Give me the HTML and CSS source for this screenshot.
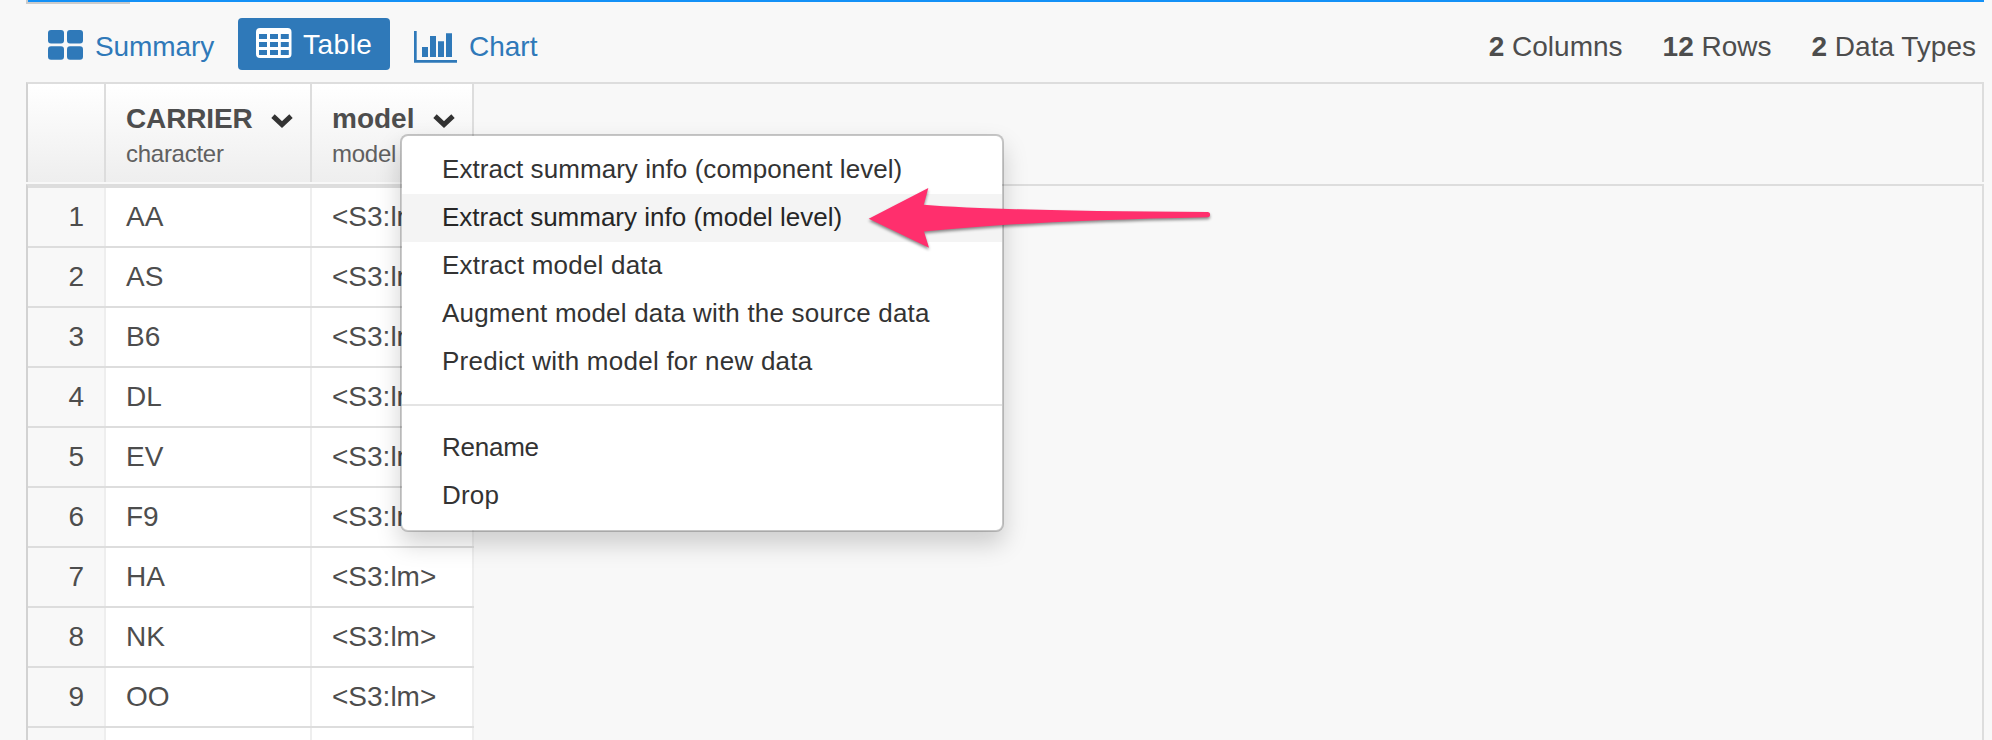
FILE: index.html
```html
<!DOCTYPE html>
<html lang="en">
<head>
<meta charset="utf-8">
<title>Table view</title>
<link rel="stylesheet" href="styles.css">
</head>
<body>
<div class="page">
  <div class="topline"><div class="topline-tab"></div></div>
  <div class="toolbar">
    <div class="views">
      <a class="view view-summary">
        <svg class="icon" width="35" height="30" viewBox="0 0 35 30" fill="currentColor"><rect x="0" y="0" width="16" height="13.5" rx="3"/><rect x="19" y="0" width="16" height="13.5" rx="3"/><rect x="0" y="16.3" width="16" height="13.5" rx="3"/><rect x="19" y="16.3" width="16" height="13.5" rx="3"/></svg>
        <span>Summary</span>
      </a>
      <a class="view view-table">
        <svg class="icon" width="36" height="30" viewBox="0 0 36 30" fill="currentColor" fill-rule="evenodd"><path d="M4 0H31.500a4 4 0 0 1 4 4V26a4 4 0 0 1-4 4H4a4 4 0 0 1-4-4V4a4 4 0 0 1 4-4ZM3 6v5h8V6ZM14 6v5h8V6ZM24.800 6v5h8V6ZM3 14v5h8v-5ZM14 14v5h8v-5ZM24.800 14v5h8v-5ZM3 22v5h8v-5ZM14 22v5h8v-5ZM24.800 22v5h8v-5Z"/></svg>
        <span>Table</span>
      </a>
      <a class="view view-chart">
        <svg class="icon" width="43" height="32" viewBox="0 0 43 32" fill="currentColor"><path d="M0 0H2.700V29H43V31.700H0ZM8 16h6v10H8ZM16 5h6v21h-6ZM24 10.300h6V26h-6ZM32 2.300h6V26h-6Z"/></svg>
        <span>Chart</span>
      </a>
    </div>
    <div class="stats">
      <span><b>2</b> Columns</span>
      <span><b>12</b> Rows</span>
      <span><b>2</b> Data Types</span>
    </div>
  </div>
  <div class="grid-head">
    <div class="head-cell col-num"></div>
    <div class="head-cell col-carrier">
      <div class="head-name"><span>CARRIER</span><svg class="chevron" width="22" height="14" viewBox="0 0 22 14"><path d="M2 2.200 11 10.500 20 2.200"/></svg></div>
      <div class="head-type">character</div>
    </div>
    <div class="head-cell col-model">
      <div class="head-name"><span>model</span><svg class="chevron" width="22" height="14" viewBox="0 0 22 14"><path d="M2 2.200 11 10.500 20 2.200"/></svg></div>
      <div class="head-type">model</div>
    </div>
  </div>
  <div class="grid-body">
    <div class="rows">
      <div class="row"><div class="cell col-num">1</div><div class="cell col-carrier">AA</div><div class="cell col-model">&lt;S3:lm&gt;</div></div>
      <div class="row"><div class="cell col-num">2</div><div class="cell col-carrier">AS</div><div class="cell col-model">&lt;S3:lm&gt;</div></div>
      <div class="row"><div class="cell col-num">3</div><div class="cell col-carrier">B6</div><div class="cell col-model">&lt;S3:lm&gt;</div></div>
      <div class="row"><div class="cell col-num">4</div><div class="cell col-carrier">DL</div><div class="cell col-model">&lt;S3:lm&gt;</div></div>
      <div class="row"><div class="cell col-num">5</div><div class="cell col-carrier">EV</div><div class="cell col-model">&lt;S3:lm&gt;</div></div>
      <div class="row"><div class="cell col-num">6</div><div class="cell col-carrier">F9</div><div class="cell col-model">&lt;S3:lm&gt;</div></div>
      <div class="row"><div class="cell col-num">7</div><div class="cell col-carrier">HA</div><div class="cell col-model">&lt;S3:lm&gt;</div></div>
      <div class="row"><div class="cell col-num">8</div><div class="cell col-carrier">NK</div><div class="cell col-model">&lt;S3:lm&gt;</div></div>
      <div class="row"><div class="cell col-num">9</div><div class="cell col-carrier">OO</div><div class="cell col-model">&lt;S3:lm&gt;</div></div>
      <div class="row"><div class="cell col-num"></div><div class="cell col-carrier"></div><div class="cell col-model"></div></div>
    </div>
  </div>
  <div class="menu">
    <div class="item item-component">Extract summary info (component level)</div>
    <div class="item item-active">Extract summary info (model level)</div>
    <div class="item item-loose">Extract model data</div>
    <div class="item item-loose">Augment model data with the source data</div>
    <div class="item item-predict">Predict with model for new data</div>
    <div class="divider"></div>
    <div class="item item-tight">Rename</div>
    <div class="item item-loose">Drop</div>
  </div>
  <svg class="arrow" width="350" height="70" viewBox="0 0 350 70"><path d="M8.700 28.700 68.300-2 63.800 14.700Q140 21 347.500 22a2.500 2.500 0 0 1 0 5.200Q160 31 64 41.600L69 57.700Z"/></svg>
</div>
</body>
</html>
```
FILE: styles.css
```css
* { box-sizing: border-box; }

body {
  margin: 0;
  background: #f8f8f8;
  color: #4d4d4d;
  font: 28px "Liberation Sans", Arial, sans-serif;
}

.page {
  position: relative;
  display: flex;
  flex-direction: column;
  height: 740px;
  padding: 0 8px 0 26px;
  overflow: hidden;
}

.topline {
  flex: none;
  height: 4px;
  margin-left: 2px;
  border-top: 2px solid #1491f7;
}

.topline-tab {
  width: 104px;
  height: 4px;
  margin: -2px 0 0 -2px;
  border-left: 2px solid #ccc;
  border-bottom: 2px solid #ccc;
}

.toolbar {
  flex: none;
  display: flex;
  justify-content: space-between;
  height: 78px;
  padding: 14px 8px 0 22px;
}

.views { display: flex; }

.view {
  display: flex;
  align-items: flex-start;
  height: 52px;
  line-height: 58px;
  color: #2f79b9;
}

.icon { flex: none; display: block; }

.view-summary { width: 190px; gap: 12px; letter-spacing: -.1px; }
.view-summary .icon { margin-top: 12px; }

.view-table {
  width: 152px;
  padding-left: 18px;
  gap: 11px;
  border-radius: 4px;
  background: #2f79b9;
  color: #fff;
  line-height: 54px;
  letter-spacing: .5px;
}
.view-table .icon { margin-top: 10px; }

.view-chart { margin-left: 24px; gap: 12px; }
.view-chart .icon { margin-top: 13px; }

.stats {
  display: flex;
  gap: 40px;
  line-height: 58px;
}

.grid-head {
  flex: none;
  display: flex;
  height: 100px;
  border: 2px solid #ddd;
  border-left-color: #d2d2d2;
  border-bottom: 0;
}

.head-cell {
  border-right: 2px solid #ddd;
  background: linear-gradient(#fff, #eee);
}

.col-num { width: 78px; }
.col-carrier { width: 206px; padding-left: 20px; }
.col-model { width: 162px; padding-left: 20px; }

.head-name {
  display: flex;
  justify-content: space-between;
  height: 56px;
  padding: 18px 17px 0 0;
  font-weight: bold;
  line-height: 34px;
}

.col-carrier .head-name { letter-spacing: -.15px; }

.head-type {
  font-size: 24px;
  line-height: 32px;
  color: #606060;
  margin-top: -2px;
  letter-spacing: -.27px;
}

.chevron {
  margin-top: 12px;
  fill: none;
  stroke: #333;
  stroke-width: 5;
}

.grid-body {
  flex: none;
  height: 640px;
  margin-top: 2px;
  border: 2px solid #ddd;
  border-left-color: #d2d2d2;
}

.rows { width: 446px; border-top: 2px solid #ddd; }

.row {
  display: flex;
  height: 60px;
  border-bottom: 2px solid #ddd;
  background: #fff;
}

.cell {
  border-right: 2px solid #eee;
  line-height: 58px;
}

.cell.col-num {
  padding-right: 20px;
  background: #f8f8f8;
  text-align: right;
}

.menu {
  position: absolute;
  left: 400px;
  top: 134px;
  width: 604px;
  height: 398px;
  padding: 10px 0;
  border: 2px solid rgba(0, 0, 0, .2);
  border-radius: 8px;
  background: #fff;
  background-clip: padding-box;
  box-shadow: 0 12px 24px rgba(0, 0, 0, .175);
  color: #333;
  font-size: 26px;
}

.item {
  height: 48px;
  padding-left: 40px;
  line-height: 46px;
  white-space: nowrap;
}

.item-active { background: #f4f4f4; color: #262626; }
.item-component { letter-spacing: .06px; }
.item-loose { letter-spacing: .2px; }
.item-predict { letter-spacing: .25px; }
.item-tight { letter-spacing: -.25px; }

.divider {
  height: 2px;
  margin: 18px 0;
  background: #e4e4e4;
}

.arrow {
  position: absolute;
  left: 860px;
  top: 190px;
  overflow: visible;
  fill: #ff2f6d;
  filter: drop-shadow(0 2px 1.500px rgba(0, 0, 0, .45));
}
```
